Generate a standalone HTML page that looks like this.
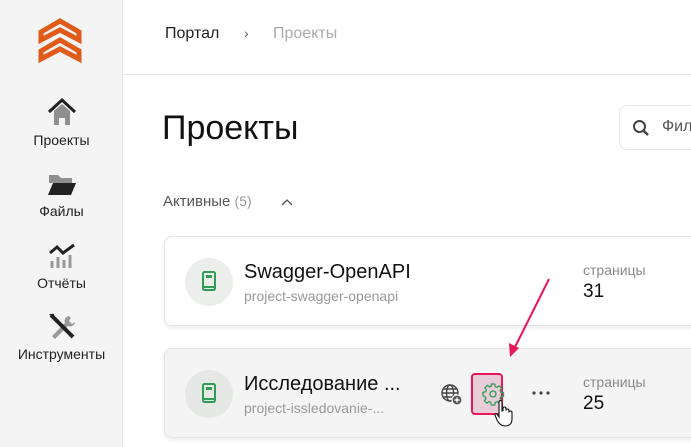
<!DOCTYPE html>
<html><head><meta charset="utf-8"><style>
*{margin:0;padding:0;box-sizing:border-box}
body{width:691px;height:447px;overflow:hidden;font-family:"Liberation Sans","Noto Sans CJK SC",sans-serif;background:#fff;position:relative;color:#1a1a1a}
.side{position:absolute;left:0;top:0;width:123px;height:447px;background:#f4f4f4;border-right:1px solid #e6e6e6}
.nav{position:absolute;left:0;width:123px;text-align:center;font-size:14px;color:#222}
.nav svg{display:block;margin:0 auto 6px}
.hdr{position:absolute;left:123px;top:0;right:0;height:75px;border-bottom:1px solid #e8e8e8}
.abs{position:absolute;white-space:nowrap}
.card{position:absolute;left:164px;width:540px;height:90px;border:1px solid #e4e4e4;border-radius:8px;box-shadow:0 2px 4px rgba(0,0,0,.08)}
.circ{position:absolute;left:20px;top:21px;width:48px;height:48px;border-radius:50%;background:#ebeeeb}
</style></head><body>
<div class="side">
<svg class="abs" style="left:37px;top:18px" width="46" height="46" viewBox="0 0 46 46">
<g fill="none" stroke="#e05a1a" stroke-width="5" stroke-linejoin="miter"><path d="M4 14 L23 3 L42 14 L42 22 L23 12 L4 22Z"/><path d="M4 33 L23 22 L42 33 L42 41 L23 31 L4 41Z"/></g></svg>
<div class="nav" style="top:98px"><svg width="30" height="28" viewBox="0 0 30 28"><path d="M7 13 L15 6 L23 13 V27 H18 V20 H12 V27 H7Z" fill="#8f8f8f"/><path d="M2 14 L15 2 L28 14" fill="none" stroke="#222" stroke-width="3"/></svg>Проекты</div>
<div class="nav" style="top:173px"><svg width="30" height="24" viewBox="0 0 30 24"><path d="M2 2 H11 L14 5 H25 V10 H2Z" fill="#8f8f8f"/><path d="M6 10 H29 L24 22 H1Z" fill="#222"/></svg>Файлы</div>
<div class="nav" style="top:243px"><svg width="30" height="26" viewBox="0 0 30 26"><path d="M3 10 L10 4 L16 10 L27 2" fill="none" stroke="#222" stroke-width="3"/><g stroke="#999" stroke-width="3"><path d="M5 18V25M11 14V25M17 17V25M23 12V25"/></g></svg>Отчёты</div>
<div class="nav" style="top:312px"><svg width="30" height="28" viewBox="0 0 30 28"><path d="M22 4 a5 5 0 0 0 -4 7 L5 24 l3 3 L21 14 a5 5 0 0 0 7-4 l-3 2 -3-3 2-3z" fill="#999"/><path d="M4 3 L26 25" stroke="#222" stroke-width="4"/><path d="M2 2 L7 2 L7 7Z" fill="#222"/></svg>Инструменты</div>
</div>
<div class="hdr"></div>
<div class="abs" style="left:165px;top:25px;font-size:16px;color:#222">Портал</div>
<div class="abs" style="left:244px;top:25px;font-size:14px;color:#555">›</div>
<div class="abs" style="left:273px;top:25px;font-size:16px;color:#aaa">Проекты</div>
<div class="abs" style="left:162px;top:109px;font-size:34px;color:#111">Проекты</div>
<div class="abs" style="left:619px;top:105px;width:100px;height:45px;border:1px solid #e6e6e6;border-radius:8px"></div>
<svg class="abs" style="left:632px;top:119px" width="18" height="18" viewBox="0 0 18 18"><circle cx="7.5" cy="7.5" r="5.5" fill="none" stroke="#444" stroke-width="2"/><path d="M11.5 11.5 L16 16" stroke="#444" stroke-width="2.5"/></svg>
<div class="abs" style="left:662px;top:118px;font-size:16px;color:#555">Фильтр</div>
<div class="abs" style="left:163px;top:193px;font-size:15px;color:#555">Активные <span style="color:#999;font-size:14px">(5)</span></div>
<svg class="abs" style="left:281px;top:198px" width="12" height="8" viewBox="0 0 12 8"><path d="M1 7 L6 2 L11 7" fill="none" stroke="#555" stroke-width="1.3"/></svg>

<div class="card" style="top:236px;background:#fff">
<div class="circ"><svg style="position:absolute;left:17px;top:13px" width="14" height="22" viewBox="0 0 14 22"><rect x="1" y="1" width="12" height="18" rx="1.5" fill="none" stroke="#2e9e57" stroke-width="2"/><rect x="4" y="4" width="6" height="3" fill="#2e9e57"/><path d="M1 16H13" stroke="#2e9e57" stroke-width="2"/></svg></div>
<div class="abs" style="left:79px;top:24px;font-size:20px;color:#111">Swagger-OpenAPI</div>
<div class="abs" style="left:79px;top:51px;font-size:14px;color:#999">project-swagger-openapi</div>
<div class="abs" style="left:418px;top:25px;font-size:14px;color:#888">страницы</div>
<div class="abs" style="left:418px;top:44px;font-size:19px;color:#111">31</div>
</div>
<div class="card" style="top:348px;background:#f4f4f4">
<div class="circ" style="background:#e6e8e6"><svg style="position:absolute;left:17px;top:13px" width="14" height="22" viewBox="0 0 14 22"><rect x="1" y="1" width="12" height="18" rx="1.5" fill="none" stroke="#2e9e57" stroke-width="2"/><rect x="4" y="4" width="6" height="3" fill="#2e9e57"/><path d="M1 16H13" stroke="#2e9e57" stroke-width="2"/></svg></div>
<div class="abs" style="left:79px;top:24px;font-size:20px;color:#111">Исследование ...</div>
<div class="abs" style="left:79px;top:51px;font-size:14px;color:#999">project-issledovanie-...</div>
<div class="abs" style="left:418px;top:25px;font-size:14px;color:#888">страницы</div>
<div class="abs" style="left:418px;top:44px;font-size:19px;color:#111">25</div>
</div>
<svg class="abs" style="left:440px;top:383px" width="24" height="24" viewBox="0 0 24 24"><g fill="none" stroke="#444" stroke-width="1.4"><circle cx="10" cy="10" r="8"/><ellipse cx="10" cy="10" rx="3.5" ry="8"/><path d="M2 10H18M3.5 6H16.5M3.5 14H16.5"/></g><circle cx="17" cy="17" r="5" fill="#555" stroke="#f4f4f4" stroke-width="1.2"/><path d="M17 14.5V19.5M14.5 17H19.5" stroke="#fff" stroke-width="1.4"/></svg>
<div class="abs" style="left:471px;top:373px;width:32px;height:42px;background:#e8cdd8;border:2px solid #e8185a;border-radius:4px"></div>
<svg class="abs" style="left:481px;top:382px" width="24" height="24" viewBox="0 0 24 24"><path d="M10.3 2h3.4l.5 2.6 1.8.8 2.2-1.5 2.4 2.4-1.5 2.2.8 1.8 2.6.5v3.4l-2.6.5-.8 1.8 1.5 2.2-2.4 2.4-2.2-1.5-1.8.8-.5 2.6h-3.4l-.5-2.6-1.8-.8-2.2 1.5-2.4-2.4 1.5-2.2-.8-1.8L2 13.7v-3.4l2.6-.5.8-1.8-1.5-2.2 2.4-2.4 2.2 1.5 1.8-.8z" fill="none" stroke="#2e9e57" stroke-width="1.3"/><circle cx="12" cy="12" r="3" fill="none" stroke="#2e9e57" stroke-width="1.3"/></svg>
<svg class="abs" style="left:493px;top:400px" width="20" height="28" viewBox="0 0 20 28"><path d="M6 2 a1.5 1.5 0 0 1 3 0 V11 l1-.5 v-2 a1.5 1.5 0 0 1 3 0 v2 a1.5 1.5 0 0 1 3 0 v2 a1.5 1.5 0 0 1 3 0 V19 q0 7-7 7 q-5 0-8-6 l-2-5 q0-2 2-1 l2 3Z" fill="#fff" stroke="#111" stroke-width="1.1"/></svg>
<svg class="abs" style="left:531px;top:390px" width="20" height="6" viewBox="0 0 20 6"><circle cx="3" cy="3" r="1.6" fill="#444"/><circle cx="10" cy="3" r="1.6" fill="#444"/><circle cx="17" cy="3" r="1.6" fill="#444"/></svg>
<svg class="abs" style="left:500px;top:275px" width="60" height="85" viewBox="0 0 60 85"><path d="M49 4 L14 74" stroke="#e8185a" stroke-width="2"/><path d="M10 82 L9 68 L19 73Z" fill="#e8185a"/></svg>
</body></html>
